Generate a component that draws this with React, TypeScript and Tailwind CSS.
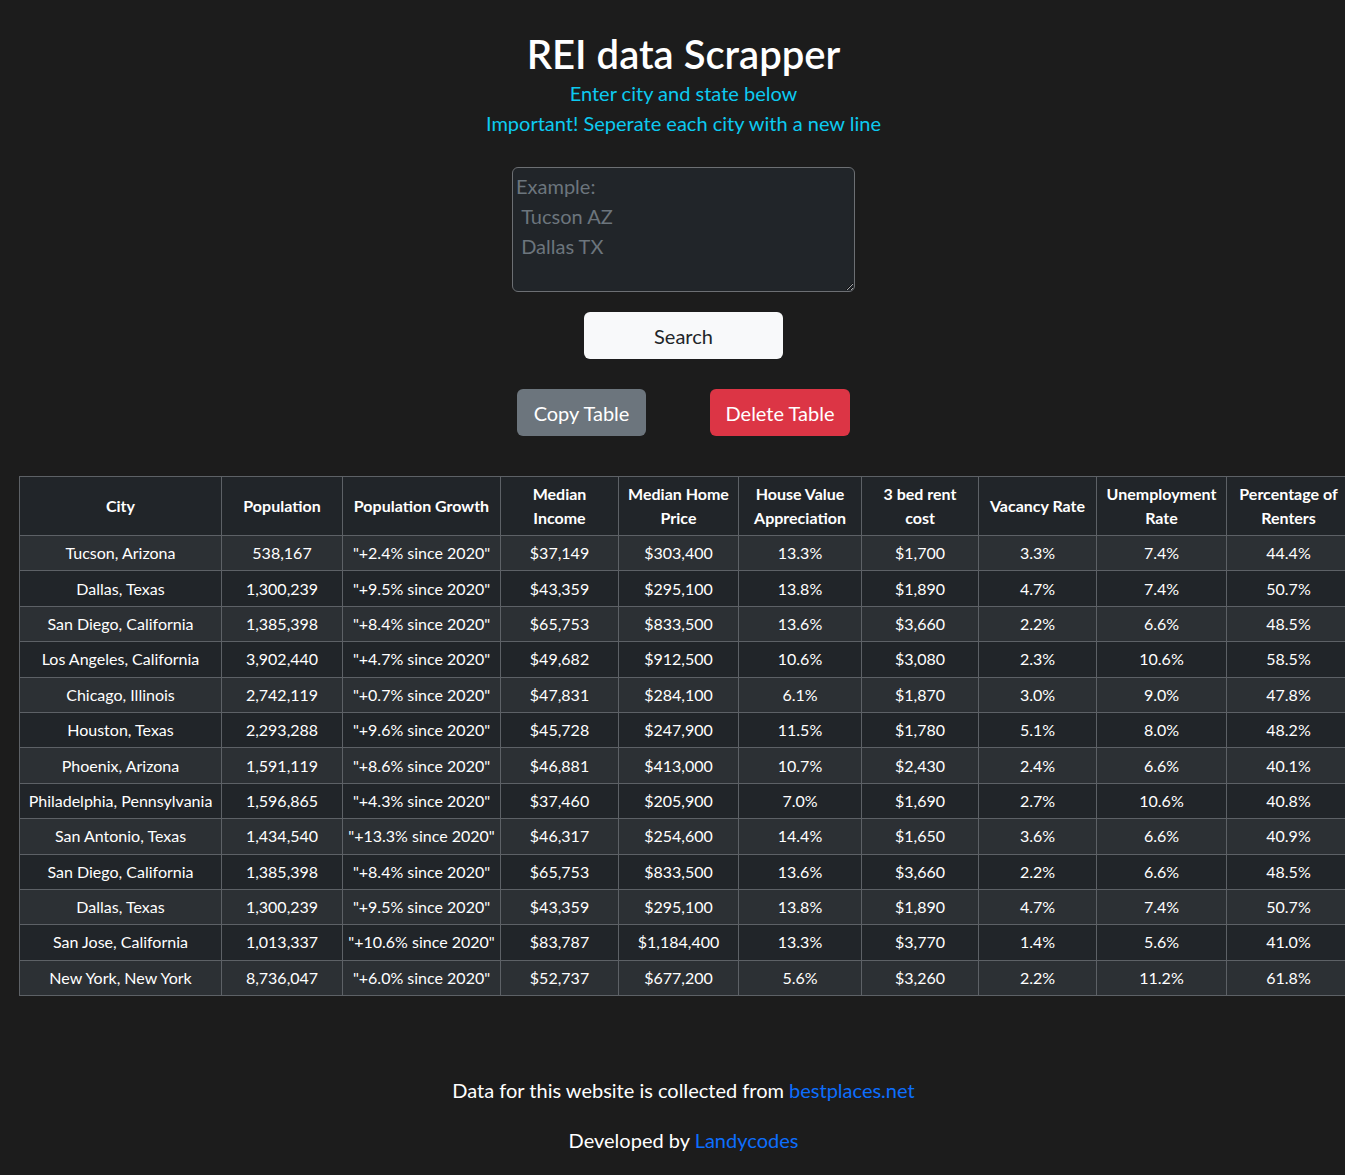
import React from 'react';

// One row per city returned by the scraper
interface CityRow {
  city: string;
  population: string;
  growth: string;
  income: string;
  homePrice: string;
  appreciation: string;
  rent: string;
  vacancy: string;
  unemployment: string;
  renters: string;
}

const rows: CityRow[] = [
  { city: 'Tucson, Arizona', population: '538,167', growth: '"+2.4% since 2020"', income: '$37,149', homePrice: '$303,400', appreciation: '13.3%', rent: '$1,700', vacancy: '3.3%', unemployment: '7.4%', renters: '44.4%' },
  { city: 'Dallas, Texas', population: '1,300,239', growth: '"+9.5% since 2020"', income: '$43,359', homePrice: '$295,100', appreciation: '13.8%', rent: '$1,890', vacancy: '4.7%', unemployment: '7.4%', renters: '50.7%' },
  { city: 'San Diego, California', population: '1,385,398', growth: '"+8.4% since 2020"', income: '$65,753', homePrice: '$833,500', appreciation: '13.6%', rent: '$3,660', vacancy: '2.2%', unemployment: '6.6%', renters: '48.5%' },
  { city: 'Los Angeles, California', population: '3,902,440', growth: '"+4.7% since 2020"', income: '$49,682', homePrice: '$912,500', appreciation: '10.6%', rent: '$3,080', vacancy: '2.3%', unemployment: '10.6%', renters: '58.5%' },
  { city: 'Chicago, Illinois', population: '2,742,119', growth: '"+0.7% since 2020"', income: '$47,831', homePrice: '$284,100', appreciation: '6.1%', rent: '$1,870', vacancy: '3.0%', unemployment: '9.0%', renters: '47.8%' },
  { city: 'Houston, Texas', population: '2,293,288', growth: '"+9.6% since 2020"', income: '$45,728', homePrice: '$247,900', appreciation: '11.5%', rent: '$1,780', vacancy: '5.1%', unemployment: '8.0%', renters: '48.2%' },
  { city: 'Phoenix, Arizona', population: '1,591,119', growth: '"+8.6% since 2020"', income: '$46,881', homePrice: '$413,000', appreciation: '10.7%', rent: '$2,430', vacancy: '2.4%', unemployment: '6.6%', renters: '40.1%' },
  { city: 'Philadelphia, Pennsylvania', population: '1,596,865', growth: '"+4.3% since 2020"', income: '$37,460', homePrice: '$205,900', appreciation: '7.0%', rent: '$1,690', vacancy: '2.7%', unemployment: '10.6%', renters: '40.8%' },
  { city: 'San Antonio, Texas', population: '1,434,540', growth: '"+13.3% since 2020"', income: '$46,317', homePrice: '$254,600', appreciation: '14.4%', rent: '$1,650', vacancy: '3.6%', unemployment: '6.6%', renters: '40.9%' },
  { city: 'San Diego, California', population: '1,385,398', growth: '"+8.4% since 2020"', income: '$65,753', homePrice: '$833,500', appreciation: '13.6%', rent: '$3,660', vacancy: '2.2%', unemployment: '6.6%', renters: '48.5%' },
  { city: 'Dallas, Texas', population: '1,300,239', growth: '"+9.5% since 2020"', income: '$43,359', homePrice: '$295,100', appreciation: '13.8%', rent: '$1,890', vacancy: '4.7%', unemployment: '7.4%', renters: '50.7%' },
  { city: 'San Jose, California', population: '1,013,337', growth: '"+10.6% since 2020"', income: '$83,787', homePrice: '$1,184,400', appreciation: '13.3%', rent: '$3,770', vacancy: '1.4%', unemployment: '5.6%', renters: '41.0%' },
  { city: 'New York, New York', population: '8,736,047', growth: '"+6.0% since 2020"', income: '$52,737', homePrice: '$677,200', appreciation: '5.6%', rent: '$3,260', vacancy: '2.2%', unemployment: '11.2%', renters: '61.8%' },
];

const headers = [
  'City',
  'Population',
  'Population Growth',
  'Median Income',
  'Median Home Price',
  'House Value Appreciation',
  '3 bed rent cost',
  'Vacancy Rate',
  'Unemployment Rate',
  'Percentage of Renters',
];

const colWidths = [202, 121, 158, 118, 120, 123, 117, 118, 130, 124];

const cell = 'border border-[#5d6166] px-1 whitespace-nowrap';

const App: React.FC = () => {
  return (
    <div
      className="min-h-[1175px] w-full overflow-x-hidden bg-[#1c1c1c] text-white"
      style={{ fontFamily: 'Lato, "Noto Sans", sans-serif' }}
    >
      <div className="flex flex-col items-center pl-[22px] pt-[30px]">
        <h1 className="text-[40px] font-semibold leading-[48px]">REI data Scrapper</h1>
        <p className="text-[20px] leading-[30px] text-[#0dcaf0]">Enter city and state below</p>
        <p className="text-[20px] leading-[30px] text-[#0dcaf0]">Important! Seperate each city with a new line</p>

        <textarea
          className="mt-[29px] h-[125px] w-[343px] rounded-md border border-[#6c6f73] bg-[#212529] px-[3px] py-[3px] text-[20px] leading-[30px] text-white placeholder:text-[#6c757d] focus:outline-none"
          placeholder={'Example:\n Tucson AZ\n Dallas TX'}
        />

        <button className="mt-[20px] h-[47px] w-[199px] rounded-md bg-[#f8f9fa] text-[20px] text-[#212529]">
          Search
        </button>

        <div className="mt-[30px] flex gap-[64px]">
          <button className="h-[47px] w-[129px] rounded-md bg-[#6c757d] text-[20px] text-white">
            Copy Table
          </button>
          <button className="h-[47px] w-[140px] rounded-md bg-[#dc3545] text-[20px] text-white">
            Delete Table
          </button>
        </div>
      </div>

      <div className="mt-[40px] pl-[19px]">
        <table className="table-fixed border-collapse bg-[#212529] text-center text-[16px] leading-6" style={{ width: 1331 }}>
          <colgroup>
            {colWidths.map((w, i) => (
              <col key={i} style={{ width: w }} />
            ))}
          </colgroup>
          <thead>
            <tr className="h-[59px]">
              {headers.map((h) => (
                <th key={h} className="border border-[#5d6166] px-2 font-bold">
                  {h}
                </th>
              ))}
            </tr>
          </thead>
          <tbody>
            {rows.map((r, i) => (
              <tr key={i} className={`h-[35.4px] ${i % 2 === 0 ? 'bg-[#2c3034]' : 'bg-[#212529]'}`}>
                <td className={cell}>{r.city}</td>
                <td className={cell}>{r.population}</td>
                <td className={cell}>{r.growth}</td>
                <td className={cell}>{r.income}</td>
                <td className={cell}>{r.homePrice}</td>
                <td className={cell}>{r.appreciation}</td>
                <td className={cell}>{r.rent}</td>
                <td className={cell}>{r.vacancy}</td>
                <td className={cell}>{r.unemployment}</td>
                <td className={cell}>{r.renters}</td>
              </tr>
            ))}
          </tbody>
        </table>
      </div>

      <footer className="mt-[79px] flex flex-col items-center gap-[20px] pb-[18px] pl-[22px] text-[20px] leading-[30px]">
        <p>
          Data for this website is collected from <a className="text-[#0d6efd]">bestplaces.net</a>
        </p>
        <p>
          Developed by <a className="text-[#0d6efd]">Landycodes</a>
        </p>
      </footer>
    </div>
  );
};

export default App;
